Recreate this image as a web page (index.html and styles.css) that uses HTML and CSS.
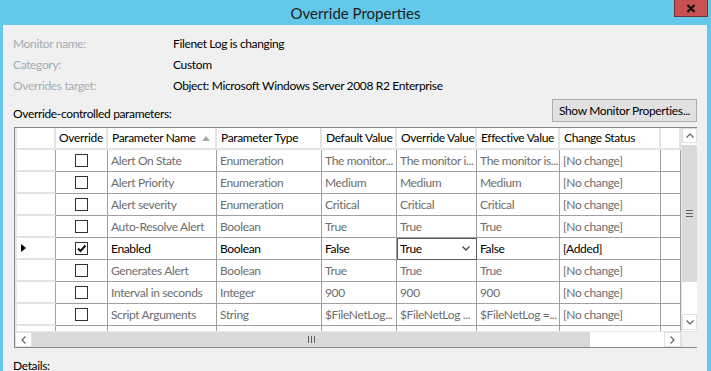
FILE: index.html
```html
<html>
    <head>
        <title>Override Properties</title>
        <link rel="stylesheet" href="styles.css">
    </head>
    <body>
        <div class="window">
            <div class="titlebar">
                <span class="title">Override Properties</span>
                <span class="close">
                    <svg width="10" height="9" viewBox="0 0 10 9"><path d="M1.5 1 L8.5 8 M8.5 1 L1.5 8" stroke="#111" stroke-width="2.2"/></svg>
                </span>
            </div>

            <div class="content">
                <div class="info">
                    <span class="label">Monitor name:</span><span class="value">Filenet Log is changing</span>
                    <span class="label">Category:</span><span class="value">Custom</span>
                    <span class="label">Overrides target:</span><span class="value">Object: Microsoft Windows Server 2008 R2 Enterprise</span>
                </div>

                <div class="toolbar">
                    <span class="caption">Override-controlled parameters:</span>
                    <button class="btn">Show Monitor Properties...</button>
                </div>

                <div class="grid">
                    <div class="rows">
                        <div class="row head">
                            <div class="cell rh"></div>
                            <div class="cell center">Override</div>
                            <div class="cell sorted">Parameter Name<span class="sort"></span></div>
                            <div class="cell">Parameter Type</div>
                            <div class="cell">Default Value</div>
                            <div class="cell">Override Value</div>
                            <div class="cell">Effective Value</div>
                            <div class="cell">Change Status</div>
                            <div class="cell"></div>
                        </div>
                        <div class="row off">
                            <div class="cell rh"></div>
                            <div class="cell center"><span class="check"></span></div>
                            <div class="cell">Alert On State</div>
                            <div class="cell">Enumeration</div>
                            <div class="cell">The monitor...</div>
                            <div class="cell">The monitor i...</div>
                            <div class="cell">The monitor is...</div>
                            <div class="cell">[No change]</div>
                            <div class="cell"></div>
                        </div>
                        <div class="row off">
                            <div class="cell rh"></div>
                            <div class="cell center"><span class="check"></span></div>
                            <div class="cell">Alert Priority</div>
                            <div class="cell">Enumeration</div>
                            <div class="cell">Medium</div>
                            <div class="cell">Medium</div>
                            <div class="cell">Medium</div>
                            <div class="cell">[No change]</div>
                            <div class="cell"></div>
                        </div>
                        <div class="row off">
                            <div class="cell rh"></div>
                            <div class="cell center"><span class="check"></span></div>
                            <div class="cell">Alert severity</div>
                            <div class="cell">Enumeration</div>
                            <div class="cell">Critical</div>
                            <div class="cell">Critical</div>
                            <div class="cell">Critical</div>
                            <div class="cell">[No change]</div>
                            <div class="cell"></div>
                        </div>
                        <div class="row off">
                            <div class="cell rh"></div>
                            <div class="cell center"><span class="check"></span></div>
                            <div class="cell">Auto-Resolve Alert</div>
                            <div class="cell">Boolean</div>
                            <div class="cell">True</div>
                            <div class="cell">True</div>
                            <div class="cell">True</div>
                            <div class="cell">[No change]</div>
                            <div class="cell"></div>
                        </div>
                        <div class="row current">
                            <div class="cell rh"><span class="pointer"></span></div>
                            <div class="cell center">
                                <span class="check">
                                    <svg width="11" height="11" viewBox="0 0 11 11"><path d="M2 5.5 L4.5 8 L9.5 2.5" fill="none" stroke="#111" stroke-width="2"/></svg>
                                </span>
                            </div>
                            <div class="cell">Enabled</div>
                            <div class="cell">Boolean</div>
                            <div class="cell">False</div>
                            <div class="cell editor">True
                                <svg width="8" height="5" viewBox="0 0 8 5"><path d="M0.5 0.5 L4 4 L7.5 0.5" fill="none" stroke="#444" stroke-width="1.3"/></svg>
                            </div>
                            <div class="cell">False</div>
                            <div class="cell">[Added]</div>
                            <div class="cell"></div>
                        </div>
                        <div class="row off">
                            <div class="cell rh"></div>
                            <div class="cell center"><span class="check"></span></div>
                            <div class="cell">Generates Alert</div>
                            <div class="cell">Boolean</div>
                            <div class="cell">True</div>
                            <div class="cell">True</div>
                            <div class="cell">True</div>
                            <div class="cell">[No change]</div>
                            <div class="cell"></div>
                        </div>
                        <div class="row off">
                            <div class="cell rh"></div>
                            <div class="cell center"><span class="check"></span></div>
                            <div class="cell">Interval in seconds</div>
                            <div class="cell">Integer</div>
                            <div class="cell">900</div>
                            <div class="cell">900</div>
                            <div class="cell">900</div>
                            <div class="cell">[No change]</div>
                            <div class="cell"></div>
                        </div>
                        <div class="row off">
                            <div class="cell rh"></div>
                            <div class="cell center"><span class="check"></span></div>
                            <div class="cell">Script Arguments</div>
                            <div class="cell">String</div>
                            <div class="cell">$FileNetLog...</div>
                            <div class="cell">$FileNetLog ...</div>
                            <div class="cell">$FileNetLog =...</div>
                            <div class="cell">[No change]</div>
                            <div class="cell"></div>
                        </div>
                        <div class="row off">
                            <div class="cell rh"></div>
                            <div class="cell"></div>
                            <div class="cell"></div>
                            <div class="cell"></div>
                            <div class="cell"></div>
                            <div class="cell"></div>
                            <div class="cell"></div>
                            <div class="cell"></div>
                            <div class="cell"></div>
                        </div>
                    </div>

                    <div class="vscroll">
                        <div class="arrow">
                            <svg width="8" height="5" viewBox="0 0 8 5"><path d="M0.5 4.5 L4 1 L7.5 4.5" fill="none" stroke="#606060" stroke-width="1.2"/></svg>
                        </div>
                        <div class="vthumb"><span class="grip-h"></span></div>
                        <div class="track"></div>
                        <div class="arrow">
                            <svg width="8" height="5" viewBox="0 0 8 5"><path d="M0.5 0.5 L4 4 L7.5 0.5" fill="none" stroke="#606060" stroke-width="1.2"/></svg>
                        </div>
                    </div>

                    <div class="hscroll">
                        <div class="arrow">
                            <svg width="5" height="8" viewBox="0 0 5 8"><path d="M4.5 0.5 L1 4 L4.5 7.5" fill="none" stroke="#606060" stroke-width="1.2"/></svg>
                        </div>
                        <div class="hthumb"><span class="grip-v"></span></div>
                        <div class="track"></div>
                        <div class="arrow">
                            <svg width="5" height="8" viewBox="0 0 5 8"><path d="M0.5 0.5 L4 4 L0.5 7.5" fill="none" stroke="#606060" stroke-width="1.2"/></svg>
                        </div>
                    </div>

                    <div class="corner"></div>
                </div>

                <div class="details">Details:</div>
            </div>
        </div>
    </body>
</html>
```

FILE: styles.css
```css
body {
    margin: 0;
    background: #64c8ea;
    font-family: Lato, "Liberation Sans", sans-serif;
    font-size: 12px;
    letter-spacing: -0.35px;
    color: #000;
}

.window {
    width: 711px;
    height: 371px;
    overflow: hidden;
    display: flex;
    flex-direction: column;
}

.titlebar {
    height: 25px;
    flex: none;
    display: grid;
    grid-template-columns: 1fr auto 1fr;
    align-items: start;
}

.title {
    grid-column: 2;
    font-size: 15px;
    letter-spacing: 0;
    line-height: 26px;
    color: #1c1c1c;
}

.close {
    grid-column: 3;
    justify-self: end;
    margin-right: 3px;
    width: 32px;
    height: 16px;
    background: #c75050;
    border: 1px solid #6e3434;
    border-top: none;
    display: flex;
    align-items: center;
    justify-content: center;
}

.content {
    flex: 1;
    margin: 0 4px 0 3px;
    background: #f0f0f0;
    padding: 8px 10px 0 10px;
}

.info {
    display: grid;
    grid-template-columns: 160px 1fr;
    grid-auto-rows: 21px;
    align-items: center;
}

.label {
    color: #a3acb6;
}

.toolbar {
    margin-top: 3px;
    height: 23px;
    display: flex;
    justify-content: space-between;
    align-items: flex-end;
}

.caption {
    line-height: 16px;
}

.btn {
    align-self: flex-start;
    width: 145px;
    height: 23px;
    padding: 0;
    background: #e1e1e1;
    border: 1px solid #adadad;
    font-family: inherit;
    font-size: 12px;
    letter-spacing: inherit;
    color: #000;
}

.grid {
    margin: 5px 0 0 1px;
    height: 221px;
    box-sizing: border-box;
    border: 1px solid #828790;
    display: grid;
    grid-template-columns: 666px 16px;
    grid-template-rows: 203px 16px;
    background: #fff;
}

.rows {
    overflow: hidden;
}

.row {
    display: grid;
    grid-template-columns: 41px 52px 109px 105px 75px 80px 83px 101px 20px;
    height: 22px;
}

.cell {
    box-sizing: border-box;
    border-right: 1px solid #a0a0a0;
    border-bottom: 1px solid #a0a0a0;
    padding: 0 3px;
    line-height: 21px;
    white-space: nowrap;
    overflow: hidden;
    background: #fff;
}

.center {
    display: flex;
    align-items: center;
    justify-content: center;
    padding: 0;
}

.head .cell {
    border-right: 2px solid #e3e3e3;
    border-bottom: 2px solid #e3e3e3;
    padding: 0 4px;
    line-height: 20px;
}

.head .center {
    padding: 0;
}

.sorted {
    display: flex;
    align-items: center;
    justify-content: space-between;
}

.sort {
    width: 0;
    height: 0;
    border-left: 4.5px solid transparent;
    border-right: 4.5px solid transparent;
    border-bottom: 5px solid #a8a8a8;
    margin-right: 1px;
}

.rh {
    border-left: 2px solid #e8e8e8;
    border-bottom: 2px solid #e3e3e3;
    display: flex;
    align-items: center;
    padding: 0 0 0 4px;
}

.off .cell {
    color: #6d6d6d;
}

.check {
    width: 13px;
    height: 13px;
    box-sizing: border-box;
    border: 1px solid #333;
    background: #fff;
    display: flex;
    align-items: center;
    justify-content: center;
}

.pointer {
    width: 0;
    height: 0;
    border-top: 4px solid transparent;
    border-bottom: 4px solid transparent;
    border-left: 5px solid #000;
}

.editor {
    outline: 1px solid #5a5a5a;
    outline-offset: -1px;
    display: flex;
    align-items: center;
    justify-content: space-between;
    padding: 0 6px 0 3px;
}

.vscroll {
    display: flex;
    flex-direction: column;
    background: #fff;
    border-left: 1px solid #e8e8e8;
}

.vscroll .arrow {
    height: 15px;
    flex: none;
    display: flex;
    align-items: center;
    justify-content: center;
    border: 1px solid #e0e0e0;
    box-sizing: border-box;
}

.vscroll .arrow:last-child {
    height: 16px;
    margin-bottom: 1px;
}

.vthumb {
    margin-top: 2px;
    height: 137px;
    background: #dadada;
    display: flex;
    align-items: center;
    justify-content: center;
}

.track {
    flex: 1;
}

.grip-h {
    width: 7px;
    height: 5px;
    border-top: 1px solid #606060;
    border-bottom: 1px solid #606060;
    background: linear-gradient(#dadada 2px, #606060 2px, #606060 3px, #dadada 3px);
}

.hscroll {
    display: flex;
    background: #fff;
    border-top: 1px solid #e8e8e8;
}

.hscroll .arrow {
    width: 17px;
    flex: none;
    display: flex;
    align-items: center;
    justify-content: center;
    border: 1px solid #e0e0e0;
    box-sizing: border-box;
}

.hthumb {
    width: 558px;
    background: #dadada;
    display: flex;
    align-items: center;
    justify-content: center;
}

.grip-v {
    width: 5px;
    height: 7px;
    border-left: 1px solid #606060;
    border-right: 1px solid #606060;
    background: linear-gradient(90deg, #dadada 2px, #606060 2px, #606060 3px, #dadada 3px);
}

.corner {
    background: #f0f0f0;
    border-left: 1px solid #e0e0e0;
    border-top: 1px solid #e0e0e0;
}

.details {
    margin-top: 10px;
    line-height: 15px;
}
```
